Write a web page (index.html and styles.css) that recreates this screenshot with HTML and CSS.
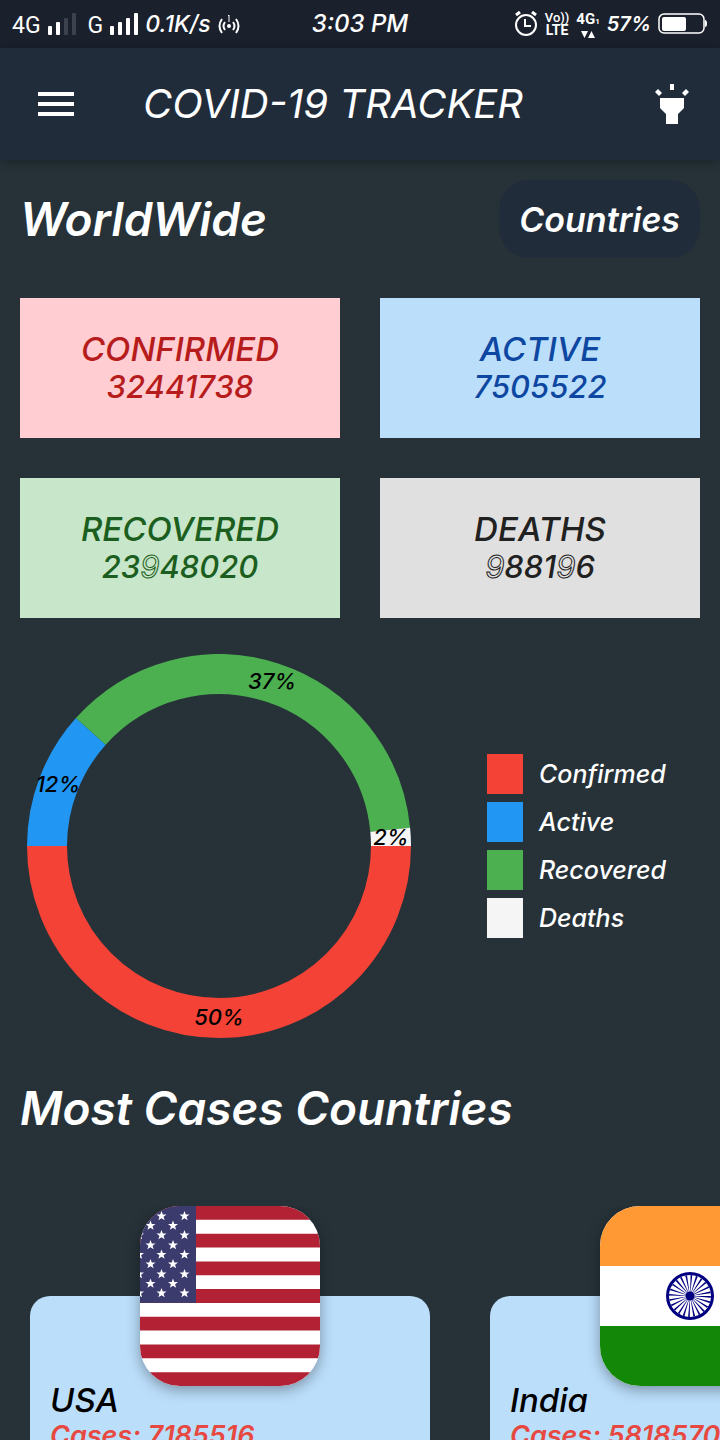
FILE: index.html
```
<!DOCTYPE html>
<html lang="en">
<head>
<meta charset="utf-8">
<meta name="viewport" content="width=device-width, initial-scale=1">
<title>COVID-19 Tracker</title>
<link rel="stylesheet" href="styles.css">
</head>
<body>
<div class="status">
  <div class="status-group">
    <span class="net">4G</span>
    <svg width="28" height="22" viewBox="0 0 28 22" fill="#fff"><rect y="13" width="4" height="9" rx="1"/><rect x="8" y="9" width="4" height="13" rx="1"/><rect x="16" y="5" width="4" height="17" rx="1" fill="#3c434f"/><rect x="24" width="4" height="22" rx="1" fill="#3c434f"/></svg>
    <span class="net net-second">G</span>
    <svg width="28" height="22" viewBox="0 0 28 22" fill="#fff"><rect y="13" width="4" height="9" rx="1"/><rect x="8" y="9" width="4" height="13" rx="1"/><rect x="16" y="5" width="4" height="17" rx="1"/><rect x="24" width="4" height="22" rx="1"/></svg>
    <span class="slant speed">0.1K/s</span>
    <svg width="22" height="20" viewBox="0 0 22 20" fill="none" stroke="#fff" stroke-width="2"><path d="M4 5Q-1 12 4 19M18 5Q23 12 18 19M7 8Q4 12 7 16M15 8Q18 12 15 16"/><path d="M10 2l1-1v7" stroke-width="1"/><circle cx="11" cy="12" r="2" fill="#fff" stroke="none"/></svg>
  </div>
  <span class="clock">3:03 PM</span>
  <div class="status-group">
    <svg width="24" height="26" viewBox="0 0 24 26" fill="none" stroke="#fff" stroke-width="2"><circle cx="12" cy="14" r="10"/><path d="M11 8v7h6"/><path d="M2 4l4-3M22 4l-4-3" stroke-width="3"/></svg>
    <span class="stack"><span class="volte">Vo))</span><span class="lte">LTE</span></span>
    <span class="stack"><span class="data">4G<small>1</small></span>
      <svg width="14" height="7" viewBox="0 0 14 7" fill="#fff"><path d="M0 0h7L3.500 7zM7 7h7L10.500 0z"/></svg></span>
    <span class="slant">57%</span>
    <svg width="50" height="22" viewBox="0 0 50 22"><rect x="1" y="1" width="45" height="19" rx="5" fill="none" stroke="#fff" stroke-width="1.500"/><rect x="4" y="4" width="24" height="14" rx="2" fill="#fff"/><path d="M47 7q2 0 2 3.500t-2 3.500z" fill="#fff"/></svg>
  </div>
</div>
<header class="appbar">
  <button class="icon-button" aria-label="Menu"><svg width="36" height="24" viewBox="0 0 36 24" fill="#fff"><path d="M0 0h36v4H0zM0 10h36v4H0zM0 20h36v4H0z"/></svg></button>
  <h1 class="title">COVID-19 TRACKER</h1>
  <button class="icon-button" aria-label="Toggle theme"><svg width="36" height="40" viewBox="0 0 36 40" fill="#fff"><path d="M6 14h24v10l-6 6v10H12V30l-6-6z"/><path d="M16 0h4v6h-4zM1 8l3-3 4 4-3 3zM35 8l-3-3-4 4 3 3z"/></svg></button>
</header>
<main class="content">
  <section class="heading-row">
    <h2 class="heading">WorldWide</h2>
    <button class="countries">Countries</button>
  </section>
  <section class="stats">
    <article class="stat confirmed"><span>CONFIRMED</span><span class="count">32441738</span></article>
    <article class="stat active"><span>ACTIVE</span><span class="count">7505522</span></article>
    <article class="stat recovered"><span>RECOVERED</span><span class="count">23<i class="hollow">9</i>48020</span></article>
    <article class="stat deaths"><span>DEATHS</span><span class="count"><i class="hollow">9</i>881<i class="hollow">9</i>6</span></article>
  </section>
  <section class="breakdown">
    <svg class="chart" viewBox="0 0 384 384" role="img" aria-label="Share of cases">
      <g fill="none" stroke-width="40">
        <path d="M20 192A172 172 0 0 0 364 192" stroke="#f44336"/>
        <path d="M20 192A172 172 0 0 1 63.800 77.400" stroke="#2196f3"/>
        <path d="M63.800 77.400A172 172 0 0 1 363.200 175.800" stroke="#4caf50"/>
        <path d="M363.200 175.800A172 172 0 0 1 364 192" stroke="#f5f5f5"/>
      </g>
      <g class="chart-label">
        <text x="245" y="35">37%</text>
        <text x="31" y="138">12%</text>
        <text x="364" y="191">2%</text>
        <text x="192" y="371">50%</text>
      </g>
    </svg>
    <ul class="legend">
      <li><span class="swatch red"></span>Confirmed</li>
      <li><span class="swatch blue"></span>Active</li>
      <li><span class="swatch green"></span>Recovered</li>
      <li><span class="swatch white"></span>Deaths</li>
    </ul>
  </section>
  <h2 class="heading most">Most Cases Countries</h2>
  <section class="carousel">
    <article class="country">
      <svg class="flag" viewBox="0 0 180 180" role="img" aria-label="Flag of the USA">
        <defs><path id="star" fill="#fff" d="M0-5L1.300-1.600 5-1.500 2.100.8 3.100 4.300 0 2.200-3.100 4.300-2.100.8-5-1.500-1.300-1.600z"/>
        <g id="row-a"><use href="#star" x="-1"/><use href="#star" x="21.500"/><use href="#star" x="44.500"/></g>
        <g id="row-b"><use href="#star" x="10.500"/><use href="#star" x="33"/></g></defs>
        <rect width="180" height="180" fill="#fff"/>
        <path fill="#b22234" d="M0 0h180v13.800H0zM0 27.700h180v13.800H0zM0 55.400h180v13.800H0zM0 83.100h180v13.800H0zM0 110.800h180v13.800H0zM0 138.500h180v13.800H0zM0 166.200h180V180H0z"/>
        <rect width="56" height="96.900" fill="#3c3b6e"/>
        <use href="#row-a" y="10"/><use href="#row-b" y="19.500"/><use href="#row-a" y="29"/><use href="#row-b" y="39"/><use href="#row-a" y="48.500"/><use href="#row-b" y="58"/><use href="#row-a" y="68"/><use href="#row-b" y="77.500"/><use href="#row-a" y="87"/>
      </svg>
      <div class="country-card"><h3>USA</h3><p>Cases: 7185516</p></div>
    </article>
    <article class="country">
      <svg class="flag" viewBox="0 0 180 180" role="img" aria-label="Flag of India">
        <rect width="180" height="180" fill="#fff"/><rect width="180" height="60" fill="#ff9933"/><rect y="120" width="180" height="60" fill="#138808"/>
        <g fill="none" stroke="#000080"><circle cx="90" cy="90" r="22.500" stroke-width="3"/><circle cx="90" cy="90" r="20.500" stroke-dasharray="1.500 3.870"/>
        <circle cx="90" cy="90" r="12" stroke-width="17" stroke-dasharray="1 2.142"/></g>
        <circle cx="90" cy="90" r="4.500" fill="#000080"/>
      </svg>
      <div class="country-card"><h3>India</h3><p>Cases: 5818570</p></div>
    </article>
  </section>
</main>
</body>
</html>
```
FILE: styles.css
```
* { box-sizing: border-box; }
body {
  margin: 0;
  height: 100vh;
  overflow: hidden;
  display: flex;
  flex-direction: column;
  background: #263238;
  color: #fff;
  font-family: Inter, "Liberation Sans", sans-serif;
  font-style: italic;
}
h1, h2, h3, p, ul { margin: 0; padding: 0; }
button {
  border: 0;
  background: none;
  color: inherit;
  font: inherit;
  cursor: pointer;
}
svg { display: block; flex: none; }
.status {
  flex: none;
  height: 48px;
  padding: 0 12px;
  display: grid;
  grid-template-columns: 1fr auto 1fr;
  align-items: center;
  background: #1b212c;
}
.status-group { display: flex; align-items: center; gap: 7px; }
.status-group:last-child { justify-content: flex-end; }
.net {
  font: normal 400 23px/28px Roboto, sans-serif;
  padding-top: 4px;
}
.net-second { margin-left: 5px; }
.slant { font-size: 20px; font-weight: 600; line-height: 24px; }
.speed { font-size: 23px; font-weight: 500; }
.clock { font-size: 24px; font-weight: 500; line-height: 28px; }
.stack {
  display: flex;
  flex-direction: column;
  align-items: center;
  font-style: normal;
  font-family: Roboto, sans-serif;
}
.volte { font-size: 13px; line-height: 13px; font-weight: 500; }
.lte { font-size: 14px; line-height: 13px; font-weight: 700; }
.data { font-size: 15px; line-height: 18px; font-weight: 700; }
.data small { font-size: 8px; }
.appbar {
  flex: none;
  height: 112px;
  padding: 0 22px 0 30px;
  display: flex;
  align-items: center;
  background: #212c3b;
  box-shadow: 0 2px 10px rgba(0, 0, 0, .3);
}
.icon-button { padding: 8px; }
.title {
  flex: 1;
  padding-left: 61px;
  font-size: 40px;
  font-weight: 400;
  line-height: 48px;
}
.content {
  flex: 1;
  min-height: 0;
  padding: 20px;
  overflow: hidden auto;
  scrollbar-width: none;
}
.heading-row { display: flex; justify-content: space-between; align-items: center; }
.heading { font-size: 46px; font-weight: 600; line-height: 52px; }
.countries {
  height: 78px;
  padding: 0 20px;
  border-radius: 30px;
  background: #212c3b;
  font-size: 34px;
  font-weight: 600;
}
.stats {
  margin-top: 40px;
  display: grid;
  grid-template-columns: 1fr 1fr;
  gap: 40px;
}
.stat {
  min-height: 140px;
  display: flex;
  flex-direction: column;
  align-items: center;
  justify-content: center;
  font-size: 33px;
  font-weight: 500;
  line-height: 38px;
}
.count { font-size: 31px; }
.confirmed { background: #ffcdd2; color: #b71c1c; }
.active { background: #bbdefb; color: #0d47a1; }
.recovered { background: #c8e6c9; color: #1b5e20; }
.deaths { background: #e0e0e0; color: #212121; }
.hollow { font-weight: 400; -webkit-text-stroke: 1px currentColor; -webkit-text-fill-color: transparent; }
.breakdown {
  margin-top: 36px;
  padding: 0 27px 0 7px;
  display: flex;
  align-items: center;
  justify-content: space-between;
}
.chart { width: 384px; height: 384px; }
.chart-label { font-size: 22px; font-weight: 500; text-anchor: middle; fill: #000; }
.legend {
  min-width: 186px;
  display: grid;
  gap: 8px;
  list-style: none;
  font-size: 25px;
  font-weight: 500;
}
.legend li { display: flex; align-items: center; gap: 16px; }
.swatch { width: 36px; height: 40px; }
.red { background: #f44336; }
.blue { background: #2196f3; }
.green { background: #4caf50; }
.white { background: #f5f5f5; }
.most { margin-top: 44px; }
.carousel {
  margin: 72px -20px 0;
  display: flex;
  overflow: auto hidden;
  scrollbar-width: none;
}
.country {
  flex: none;
  width: 460px;
  padding: 0 30px;
  display: flex;
  flex-direction: column;
  align-items: center;
}
.flag {
  position: relative;
  width: 180px;
  height: 180px;
  border-radius: 40px;
  box-shadow: 0 4px 14px rgba(0, 0, 0, .35);
}
.country-card {
  width: 100%;
  min-height: 300px;
  margin-top: -90px;
  padding: 84px 20px 20px;
  border-radius: 20px;
  background: #bbdefb;
}
.country-card h3 { color: #000; font-size: 33px; font-weight: 500; line-height: 40px; }
.country-card p { color: #e74840; font-size: 27px; font-weight: 600; line-height: 32px; white-space: nowrap; }
```
